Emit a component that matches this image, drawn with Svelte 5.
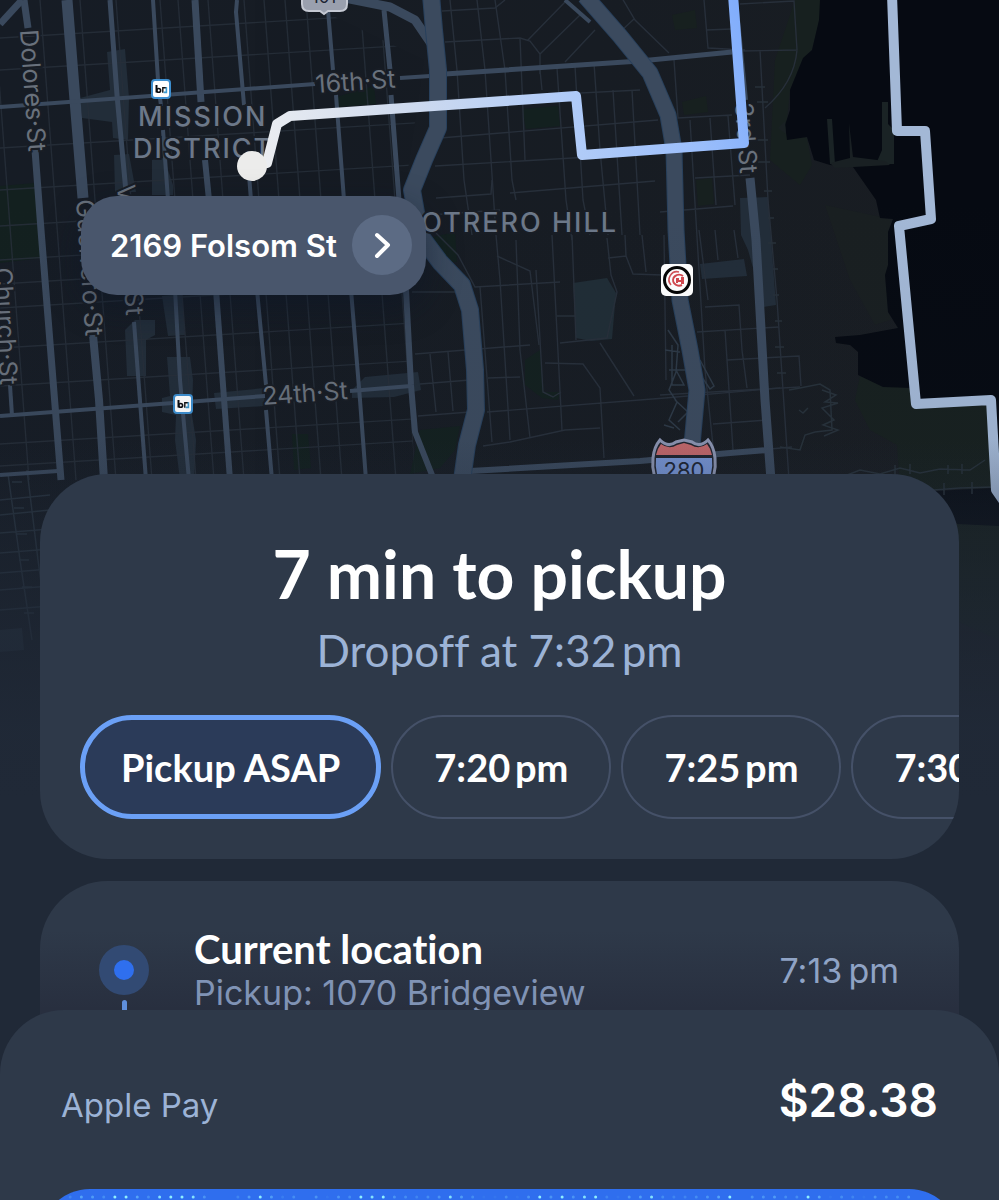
<script>
  const chips = [
    { label: 'Pickup ASAP' },
    { label: '7:20\u2009pm' },
    { label: '7:25\u2009pm' },
    { label: '7:30\u2009pm' }
  ];
  let selected = $state(0);

  // Brightness (0-9) of each light in the shimmer row of the request button
  const shimmer = '93764997489985003696240515498954345864114159595893156843345790556449714315445';

  // Side streets west of the freeway
  const westX = [5, 52, 92, 128, 172, 190, 220, 256, 276, 297, 318, 372, 392];
  const westY = [30, 62, 140, 182, 218, 252, 276, 300, 340, 378, 436, 458];

  const avenues = [
    ['M0 24 22 0', 7],
    ['M24 0 28 28', 7],
    ['M35 150 41 230 57 430 61 480', 7],
    ['M10 385 12 416', 4],
    ['M67 0 75 100 83 198', 11],
    ['M93 335 99 400 104 480', 8],
    ['M110 0 117 95 126 192', 5],
    ['M134 322 146 480', 4],
    ['M153 0 158 80M160 98 161 106M163 130 168 200', 4],
    ['M175 290 180 380 189 480', 4],
    ['M195 0 201 102', 7],
    ['M205 160 209 200', 6],
    ['M216 290 230 480', 6],
    ['M237 0 236 12 244 105', 4],
    ['M249 175 251 200M257 290 266 385M266 410 272 480', 4],
    ['M328 10 333 70M336 95 344 200M351 290 360 400 366 480', 4],
    ['M384 10 390 70M391 95 399 200', 5],
    ['M406 290 411 385 415 432 434 480', 6],
    ['M0 107 315 84', 4],
    ['M400 78 430 76', 4],
    ['M445 74 640 61 732 52', 5],
    ['M0 416 265 396M350 391 411 386', 4],
    ['M0 475 58 471', 4],
    ['M470 471 640 461 730 453 768 450', 6],
    ['M750 178 756 240 765 400 771 480', 9],
    ['M735 0 745 100', 6]
  ];
</script>

<div class="screen">
  <svg class="map" viewBox="0 0 999 1000" preserveAspectRatio="xMinYMin slice" role="img" aria-label="Route map">
    <defs>
      <linearGradient id="land" x1="0" x2="1" y1="0" y2="0">
        <stop offset="0" stop-color="#161c25" />
        <stop offset="0.6" stop-color="#171c23" />
        <stop offset="1" stop-color="#191d22" />
      </linearGradient>
      <linearGradient id="route" gradientUnits="userSpaceOnUse" x1="260" y1="165" x2="740" y2="20">
        <stop offset="0" stop-color="#eceef1" />
        <stop offset="0.3" stop-color="#d0dbee" />
        <stop offset="0.62" stop-color="#b0cbf8" />
        <stop offset="0.85" stop-color="#9bbefb" />
        <stop offset="1" stop-color="#82aefc" />
      </linearGradient>
      <linearGradient id="fade" x1="0" x2="0" y1="0" y2="1">
        <stop offset="0" stop-color="#202937" stop-opacity="0" />
        <stop offset="0.4" stop-color="#202937" stop-opacity="0.5" />
        <stop offset="0.8" stop-color="#202937" stop-opacity="0.95" />
        <stop offset="1" stop-color="#202937" />
      </linearGradient>
      <clipPath id="west"><path d="M0 0H300L424 60 405 190 405 290 415 480 H0Z" /></clipPath>
    </defs>

    <rect width="999" height="1000" fill="url(#land)" />

    <g fill="#13201f">
      <path d="M0 186 35 183 42 258 0 263Z" />
      <path d="M336 97 374 86 376 104 338 107Z" />
      <path d="M522 109 558 106 560 126 526 129Z" />
      <path d="M420 240 455 232 457 262 440 262Z" />
      <path d="M525 360 540 350 544 392 560 392 558 400 542 398 525 385Z" />
      <path d="M292 434 308 434 311 468 294 470Z" />
      <path d="M420 430 460 426 455 450 440 468 410 474Z" />
    </g>
    <g fill="#17201f">
      <path d="M795 0H825L812 50 803 60 790 90 786 130 807 138 812 165 800 185 770 160 775 60Z" />
      <path d="M672 15 695 10 697 28 675 30ZM682 102 706 96 708 112 684 115ZM696 180 712 178 714 204 698 206Z" />
      <path d="M860 376 915 390 999 400 999 488 900 490 897 445 870 430 855 400Z" />
      <path d="M955 524 999 524 999 640 955 620Z" />
    </g>
    <path fill="#191f21" d="M825 205 890 219 890 320 875 325 850 280Z" />

    <path fill="#060a12" d="M820 0 819 20 812 50 803 58 790 90 790 110 785 125 787 140 807 137 814 160 830 165 853 167 876 200 880 218 893 219 888 232 888 265 885 275 888 312 898 328 860 335 835 337 836 343 850 345 858 352 858 375 883 387 912 388 915 404 991 399 999 450V0Z" />
    <path fill="#090e16" d="M935 491 994 488 999 500V526L957 524Z" />
    <path fill="#1a2325" d="M882 102H888V124L894 130V164H876L882 150ZM827 119H832L835 164H830Z" />
    <path fill="#192023" d="M849 123 853 157 885 161 890 165 835 168 830 163 850 158ZM778 128 785 121 786 134Z" />

    <g fill="#222d39">
      <path d="M107 52 125 49 129 98 128 140 113 138 112 122 82 118 80 98 110 90Z" />
      <path d="M114 155 129 154 136 192H115ZM152 160 164 158 173 185V195H152Z" />
      <path d="M125 330 135 320 155 320 155 335 146 340 146 376 127 376Z" />
      <path d="M162 296 182 294 185 335 168 336Z" />
      <path d="M167 357 190 357 193 380 192 415 196 440 194 480 180 480 175 440 176 415 162 412 162 398 170 396Z" />
      <path d="M214 393 265 388 264 406 216 409ZM352 390 365 377 418 372 421 390 394 397 352 398Z" />
      <path d="M573 283 607 278 616 293 612 339 591 341 576 338Z" fill="#202d36" />
      <path d="M700 264 744 259 747 276 702 279ZM740 198 768 197 776 305 763 307 755 275 748 250 741 235Z" />
      <path d="M0 630 22 628 24 650 0 652Z" />
    </g>

    <g fill="none" stroke="#272f3a" stroke-width="1.4">
      <g clip-path="url(#west)" opacity="0.85">
        {#each westX as x}
          <path d="M{x - 12} 0 {x + 24} 480" />
        {/each}
        {#each westY as y}
          <path d="M0 {y + 8} 430 {y - 18}" />
        {/each}
      </g>
      <path d="M442 11 495 8 505 0M445 42 520 38 530 41 540 54 540 74M528 40 565 2M540 54 580 15M565 62 595 30M622 -2 635 20 669 53M634 19 620 32" />
      <path d="M450 0 457 70 464 180 472 235M477 0 485 70 495 220M495 0 505 70 512 180 516 200M520 38 525 160M540 70 542 90M557 68 566 200 572 240M575 66 583 200 590 235M594 63 600 150 608 235M613 90 622 235M632 90 640 235" />
      <path d="M440 138 658 120M435 166 590 157 655 153M436 198 491 194 492 180M510 193 655 181M442 100 640 90M430 215 500 210" />
      <path d="M496 235 500 280 510 440M480 287 492 442M516 240 520 350 530 438M536 270 543 392 553 397 561 392M552 235 562 430M572 235 576 340M607 238 611 275 617 292 607 338 560 343M600 343 634 396" />
      <path d="M436 233 458 255 475 287 560 282M497 256 530 271 539 345M412 292 460 292M415 354 530 345M545 363 583 364 600 388 604 458M487 412 665 398 780 388M483 446 510 442 565 430 600 428M557 316 575 316M488 378 520 377" />
      <path d="M420 384 470 380M418 416 470 412M430 354 436 412M448 352 453 411" />
      <path d="M608 258 626 256 633 274 662 275M625 235 626 256M642 235 646 272M664 235 666 380" />
      <path d="M704 0 708 48 745 50M706 30 732 29M740 4 794 1 797 50 740 51M797 50 C795 75 780 95 765 108M760 50 768 200 777 300 789 480M674 60 678 118 732 115M690 120 705 370 714 455M710 118 716 205M728 116 735 205M695 178 750 175M660 212 733 206" />
      <path d="M705 307 739 305 742 350 747 388M697 332 779 327M725 330 733 450M727 360 799 356 801 386M713 424 768 420M660 395 800 387M699 230 708 300M715 230 718 260M734 230 738 258M770 449 792 447" />
    </g>

    <g fill="none" stroke="#2d3946" stroke-width="1.5">
      <path d="M668 330 678 345 676 372 669 390 677 402 669 420 680 430M672 345V385H684L676 370M700 360 714 386 710 389 697 370M665 350 680 352M669 370H686M664 425 674 428M675 400 688 412 678 422" />
      <path d="M755 87H765M757 102H768M756 140H768M758 162H770M764 191H772M768 218H774M768 243H776M773 269H778M773 295H779M775 321H782M775 347H784M777 373H786M789 390 800 388 820 384 830 390 832 430 815 432 805 435 800 450 780 447M822 390 836 395 825 402 838 403 822 408 834 420 823 425 838 430 824 436M799 410 803 413 808 408M842 477 860 470 880 474 900 468 920 473 940 469 970 470 985 460M895 465V476M910 464V474M948 465V474M962 464V474M920 491 960 488 994 487M944 483V495M972 482V494" stroke="#27313a" />
      <path d="M0 500 50 495M0 515 50 510M0 533 50 529M0 553 50 549M0 573 50 569M0 590 50 586M0 610 50 606M8 474 20 560 32 640M27 470 38 560 50 650M12 482H22M14 508H24M17 534H27M19 560H29M22 587H32M24 613H34" stroke="#27323e" />
    </g>

    <g fill="none" stroke="#3a495d" stroke-linejoin="round">
      {#each avenues as [d, width]}
        <path {d} stroke-width={width} />
      {/each}
      <path d="M345 -2 390 7 415 20 432 45" stroke-width="9" />
      <path d="M565 0 590 22" stroke-width="4" />
    </g>
    <g fill="none" stroke-linejoin="round">
      <g stroke="#28405c">
        <path d="M431 -5 434 30 438 70 438 128 424 160 412 190 420 235 440 262 462 285 470 310 475 370 476 410 467 445 462 480" stroke-width="18" />
        <path d="M585 -4 620 36 650 73 668 115 674 150 676 230 680 300 690 350 697 390 692 445" stroke-width="17" />
      </g>
      <g stroke="#3b4a5e">
        <path d="M431 -5 434 30 438 70 438 128 424 160 412 190 420 235 440 262 462 285 470 310 475 370 476 410 467 445 462 480" stroke-width="16" />
        <path d="M585 -4 620 36 650 73 668 115 674 150 676 230 680 300 690 350 697 390 692 445" stroke-width="15" />
      </g>
    </g>

    <g class="street">
      <text transform="translate(20 30) rotate(86)">Dolores·St</text>
      <text transform="translate(76 200) rotate(86)">Guerrero·St</text>
      <text transform="translate(-6 268) rotate(87)">Church·St</text>
      <text transform="translate(117 185) rotate(86)">Valencia·St</text>
      <text transform="translate(316 93) rotate(-4)">16th·St</text>
      <text transform="translate(263 405) rotate(-4)">24th·St</text>
      <text transform="translate(735 103) rotate(86)">3rd·St</text>
    </g>
    <g class="district">
      <text x="138" y="126">MISSION</text>
      <text x="133" y="158">DISTRICT</text>
      <text x="402" y="232">POTRERO HILL</text>
    </g>

    <g fill="none" stroke-linejoin="round">
      <path d="M892 -5 897 131 925 131 931 219 899 226 916 404 991 400 996 490 1010 510" stroke="#a3b8d6" stroke-width="10" />
      <path d="M733 -5 744 143 582 155 576 96 290 116 277 124 267 163 252 165" stroke="url(#route)" stroke-width="10" />
    </g>
    <circle cx="252" cy="166" r="15" fill="#ececeb" />

    <g>
      {#each [[161, 89], [183, 404]] as [x, y]}
        <g transform="translate({x} {y})">
          <rect x="-9" y="-9" width="18" height="18" rx="3" fill="#fff" stroke="#3d8fd0" stroke-width="2" />
          <path d="M-4.500-4V3.500" fill="none" stroke="#0a0c10" stroke-width="2" />
          <circle cx="-2.300" cy="1.400" r="1.900" fill="none" stroke="#0a0c10" stroke-width="1.600" />
          <path d="M1.800 3.800V-1.200H5.600" fill="none" stroke="#111" stroke-width="1.400" />
          <path d="M5.400-1.800V3.400H2.600" fill="none" stroke="#3d9ad0" stroke-width="1.600" />
        </g>
      {/each}
      <g transform="translate(677 280)">
        <rect x="-16" y="-16" width="32" height="32" rx="5" fill="#fff" />
        <circle r="12.500" fill="#fff" stroke="#050505" stroke-width="3" />
        <path d="M2-8A8 8 0 0 0-6 5" fill="none" stroke="#d3555a" stroke-width="1.600" />
        <path d="M6-4A6 5.500 0 1 0 5 5" fill="none" stroke="#d3484e" stroke-width="2" />
        <path d="M-1-2H2V0H4V-3H7V4H4V2H1V3H-1Z" fill="#d3484e" />
      </g>
    </g>

    <path d="M302-4H347V4Q347 11 340 11H328L324 14 320 11H309Q302 11 302 4Z" fill="#9aa0ae" stroke="#c5c9d3" stroke-width="2" />
    <text class="shield" x="324" y="3" font-size="17">101</text>
    <g>
      <path d="M660 440Q668 448 676 442L684 440 692 442Q700 448 708 440 714 447 715 458 717 476 706 490L684 502 662 490Q651 476 653 458 654 447 660 440Z" fill="#20242e" stroke="#8c95b2" stroke-width="3" />
      <path d="M661 444Q669 450 677 445L684 443 691 445Q699 450 707 444 711 449 712 455H656Q657 449 661 444Z" fill="#c4686b" />
      <path d="M656 458H712Q714 475 704 487L684 498 664 487Q654 475 656 458Z" fill="#7795d5" />
      <text class="shield" x="684" y="478" font-size="22">280</text>
    </g>

    <rect y="200" width="999" height="620" fill="url(#fade)" opacity="0.12" />
    <rect y="440" width="999" height="360" fill="url(#fade)" />
    <rect y="800" width="999" height="200" fill="#202937" />
  </svg>

  <button class="stop" type="button">
    <span>2169 Folsom St</span>
    <span class="go">
      <svg width="60" height="60" viewBox="0 0 60 60" aria-hidden="true">
        <path d="M25 20 36 30 25 41" fill="none" stroke="#fff" stroke-width="4" stroke-linecap="round" stroke-linejoin="round" />
      </svg>
    </span>
  </button>

  <main>
    <section class="card summary">
      <h1>7 min to pickup</h1>
      <p class="dropoff">Dropoff at 7:32{'\u2009'}pm</p>
      <div class="chips">
        {#each chips as chip, i}
          <button type="button" class:active={selected === i} aria-pressed={selected === i} onclick={() => (selected = i)}>
            {chip.label}
          </button>
        {/each}
      </div>
    </section>

    <section class="card trip">
      <div class="marker"><span class="halo"></span><span class="line"></span></div>
      <div class="place">
        <h2>Current location</h2>
        <p>Pickup: 1070 Bridgeview</p>
      </div>
      <time>7:13{'\u2009'}pm</time>
    </section>
  </main>

  <footer>
    <div class="payment">
      <span class="method">Apple Pay</span>
      <strong>$28.38</strong>
    </div>
    <button class="request" type="button" aria-label="Request ride">
      <svg viewBox="0 0 919 110" preserveAspectRatio="xMidYMin slice" aria-hidden="true">
        {#each shimmer as level, i}
          <circle cx={19 + i * 11.18} cy="8" r="1.500" fill={level > 7 ? '#8ff0ff' : '#62b4fa'} opacity={level / 9} />
        {/each}
      </svg>
    </button>
  </footer>
</div>

<style>
  :global(body) {
    background: #202937;
  }

  .screen {
    position: relative;
    display: flex;
    flex-direction: column;
    height: 100vh;
    overflow: hidden;
    background: #202937;
    color: #fff;
    font-family: Inter, 'Liberation Sans', sans-serif;
    font-variant-ligatures: none;
  }

  button {
    font: inherit;
    font-variant-ligatures: none;
    color: inherit;
    cursor: pointer;
  }

  h1,
  h2,
  p {
    margin: 0;
  }

  .map {
    position: absolute;
    inset: 0;
    width: 100%;
    height: auto;
  }

  .street {
    fill: #69717c;
    font-size: 25px;
    stroke: #181d25;
    stroke-width: 4px;
    paint-order: stroke;
  }

  .district {
    fill: #6c7889;
    font-size: 27px;
    font-weight: 500;
    letter-spacing: 2px;
    stroke: #181d25;
    stroke-width: 4px;
    paint-order: stroke;
  }

  .shield {
    fill: #1d2534;
    text-anchor: middle;
  }

  .stop {
    position: absolute;
    top: 196px;
    left: 81px;
    display: flex;
    align-items: center;
    gap: 15px;
    padding: 19px 14px 20px 29px;
    border: 0;
    border-radius: 36px;
    background: #49566c;
    box-shadow: 0 12px 32px rgb(12 22 40 / 50%);
    font-size: 31px;
    font-weight: 600;
    white-space: nowrap;
  }

  .go {
    display: flex;
    border-radius: 50%;
    background: #5c6b84;
  }

  main {
    position: relative;
    display: flex;
    flex: 1;
    flex-direction: column;
    gap: 22px;
    min-height: 0;
    padding: 39.5vh 40px 0;
    overflow: hidden;
  }

  .card {
    flex: none;
    border-radius: 68px;
    background: #2e3949;
    overflow: hidden;
  }

  .summary {
    padding: 64px 0 40px;
    text-align: center;
  }

  h1 {
    font-family: Lato, sans-serif;
    font-size: 66px;
    font-weight: 700;
    line-height: 72px;
  }

  .dropoff {
    margin-top: 12px;
    color: #9cb3d6;
    font-family: Lato, sans-serif;
    font-size: 44px;
    line-height: 56px;
  }

  .chips {
    display: flex;
    gap: 10px;
    margin-top: 37px;
    padding-left: 40px;
  }

  .chips button {
    flex: none;
    height: 104px;
    padding: 0 41px;
    border: 2px solid #455168;
    border-radius: 52px;
    background: none;
    font-family: Lato, sans-serif;
    font-size: 38px;
    font-weight: 700;
  }

  .chips .active {
    padding: 0 36px;
    border: 5px solid #6ba0f6;
    background: #2b3b59;
  }

  .trip {
    display: flex;
    gap: 45px;
    min-height: 260px;
    padding: 46px 60px 0 59px;
    box-sizing: border-box;
    background: linear-gradient(#2e3949 50px, #282f3f 128px);
  }

  .marker {
    display: flex;
    flex: none;
    flex-direction: column;
    align-items: center;
    gap: 5px;
    padding-top: 18px;
  }

  .halo {
    width: 20px;
    height: 20px;
    border: 15px solid #324a73;
    border-radius: 50%;
    background: #2f6fee;
  }

  .line {
    width: 5px;
    height: 80px;
    border-radius: 3px;
    background: #5f8fdc;
  }

  .place {
    flex: 1;
  }

  h2 {
    font-family: Lato, sans-serif;
    font-size: 40px;
    font-weight: 700;
    line-height: 44px;
  }

  .place p {
    color: #8093b5;
    font-size: 34px;
    line-height: 44px;
  }

  time {
    padding-top: 22px;
    color: #8fa3c5;
    font-size: 34px;
    line-height: 44px;
  }

  footer {
    position: relative;
    flex: none;
    margin: -70px 0 -99px;
    padding: 60px 40px 0;
    border-radius: 64px 64px 0 0;
    background: #2e3949;
  }

  .payment {
    display: flex;
    align-items: baseline;
    justify-content: space-between;
    height: 60px;
    padding: 0 21px;
  }

  .method {
    color: #9cb3d6;
    font-size: 33px;
    line-height: 44px;
  }

  strong {
    font-size: 46px;
    font-weight: 600;
    line-height: 60px;
  }

  .request {
    display: block;
    width: 100%;
    height: 110px;
    margin-top: 59px;
    padding: 0;
    border: 0;
    border-radius: 50px;
    background: #2f6eee;
    overflow: hidden;
  }

  .request svg {
    display: block;
    width: 100%;
    height: 100%;
  }
</style>
